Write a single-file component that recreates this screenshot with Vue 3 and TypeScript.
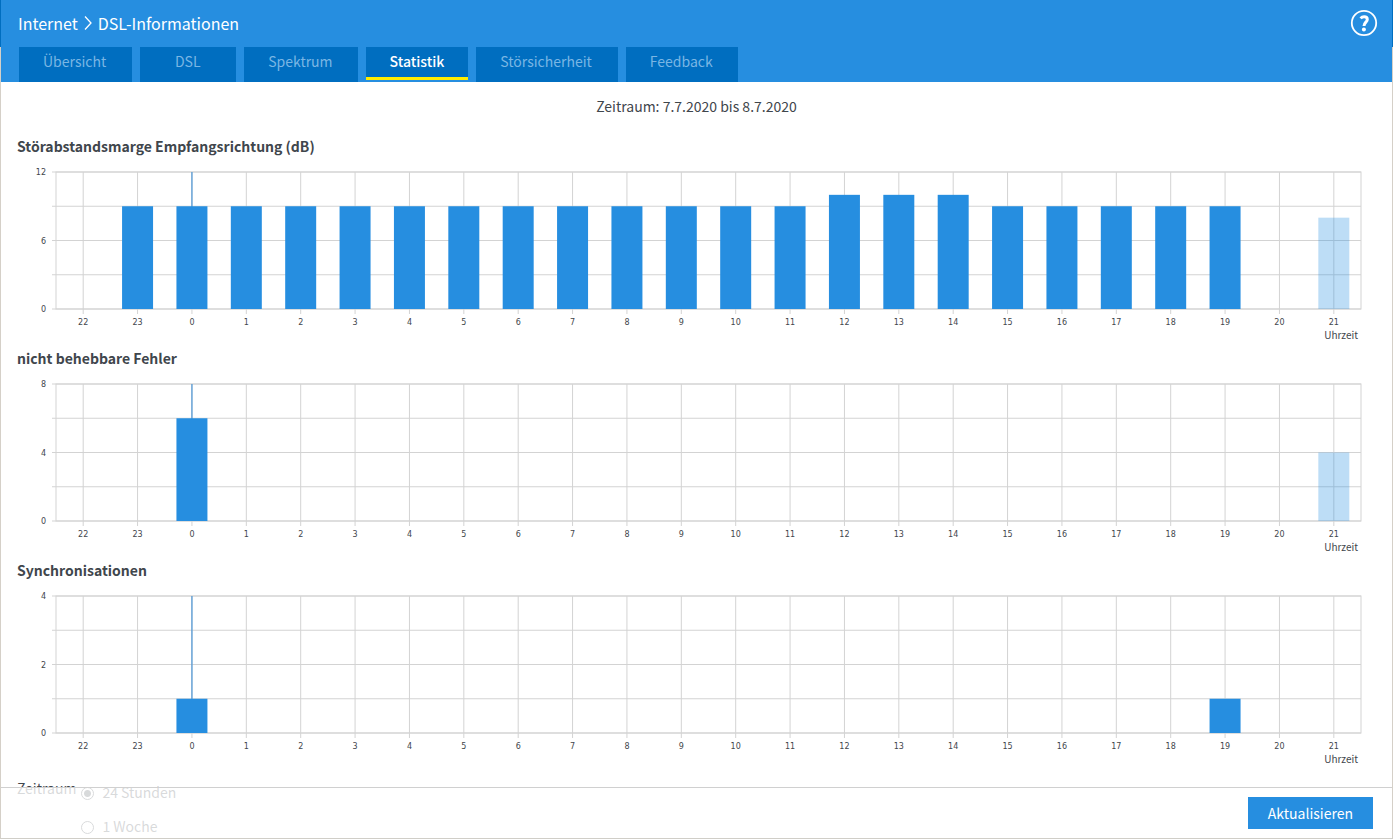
<script setup lang="ts">
interface Bar {
  hour: number
  value: number
  current?: boolean
}
interface Chart {
  title: string
  max: number
  bars: Bar[]
}

const tabs = ['Übersicht', 'DSL', 'Spektrum', 'Statistik', 'Störsicherheit', 'Feedback']
const activeTab = 'Statistik'

const hours = Array.from({ length: 24 }, (_, i) => (i + 22) % 24)
const plotHeight = 137
const barShare = 0.57

const marginValues = [9, 9, 9, 9, 9, 9, 9, 9, 9, 9, 9, 9, 9, 10, 10, 10, 9, 9, 9, 9, 9]

const charts: Chart[] = [
  {
    title: 'Störabstandsmarge Empfangsrichtung (dB)',
    max: 12,
    bars: [
      ...marginValues.map((value, i) => ({ hour: (i + 23) % 24, value })),
      { hour: 21, value: 8, current: true },
    ],
  },
  {
    title: 'nicht behebbare Fehler',
    max: 8,
    bars: [
      { hour: 0, value: 6 },
      { hour: 21, value: 4, current: true },
    ],
  },
  {
    title: 'Synchronisationen',
    max: 4,
    bars: [
      { hour: 0, value: 1 },
      { hour: 19, value: 1 },
    ],
  },
]

const center = (hour: number) => `${((hours.indexOf(hour) + 0.5) / 24) * 100}%`
const barLeft = (hour: number) => `${((hours.indexOf(hour) + (1 - barShare) / 2) / 24) * 100}%`
const barWidth = `${(barShare / 24) * 100}%`
const level = (value: number, max: number) => plotHeight * (1 - value / max)
</script>

<template>
  <div class="frame">
    <header>
      <div class="titlebar">
        <h1>
          Internet
          <svg class="chevron" viewBox="0 0 8 16" aria-hidden="true"><path d="M1 1.5 7 8 1 14.5" /></svg>
          DSL-Informationen
        </h1>
        <button class="help" type="button" aria-label="Hilfe">
          <svg viewBox="0 0 28 28" aria-hidden="true">
            <circle cx="14" cy="14" r="12.2" />
            <path class="hook" d="M10.6 9.4C11.6 8.2 12.7 7.7 14.1 7.7C16.1 7.7 17.3 8.8 17.3 10.4C17.3 13 14 13.4 14 17" />
            <circle class="dot" cx="13.9" cy="20.5" r="2" />
          </svg>
        </button>
      </div>
      <nav>
        <a v-for="tab in tabs" :key="tab" href="#" :class="{ active: tab === activeTab }">{{ tab }}</a>
      </nav>
    </header>

    <main>
      <p class="period">Zeitraum: 7.7.2020 bis 8.7.2020</p>

      <section v-for="chart in charts" :key="chart.title" class="chart">
        <h2>{{ chart.title }}</h2>
        <svg class="plot" role="img" :aria-label="chart.title">
          <g class="grid">
            <line v-for="n in 5" :key="'h' + n" x1="-4" x2="100%" :y1="(n - 1) * plotHeight / 4" :y2="(n - 1) * plotHeight / 4" />
            <line v-for="hour in hours" :key="'v' + hour" :x1="center(hour)" :x2="center(hour)" y1="0" :y2="plotHeight + 5" />
            <rect x="0" y="0" width="100%" :height="plotHeight" />
          </g>
          <line class="midnight" :x1="center(0)" :x2="center(0)" y1="0" :y2="plotHeight" />
          <rect
            v-for="bar in chart.bars"
            :key="bar.hour"
            :class="['bar', { current: bar.current }]"
            :x="barLeft(bar.hour)"
            :y="level(bar.value, chart.max)"
            :width="barWidth"
            :height="plotHeight - level(bar.value, chart.max)"
          />
          <g class="axis y">
            <text v-for="v in [0, chart.max / 2, chart.max]" :key="v" x="-10" :y="level(v, chart.max) + 3">{{ v }}</text>
          </g>
          <g class="axis x">
            <text v-for="hour in hours" :key="hour" :x="center(hour)" :y="plotHeight + 16">{{ hour }}</text>
          </g>
          <text class="unit" x="100%" dx="-3" :y="plotHeight + 30">Uhrzeit</text>
        </svg>
      </section>

      <div class="range" role="radiogroup" aria-labelledby="range-title">
        <span id="range-title">Zeitraum</span>
        <div class="options">
          <label><input type="radio" name="range" checked />24 Stunden</label>
          <label><input type="radio" name="range" />1 Woche</label>
        </div>
      </div>
    </main>

    <footer>
      <button type="button">Aktualisieren</button>
    </footer>
  </div>
</template>

<style>
body {
  margin: 0;
  background: #fff;
}
</style>

<style scoped>
.frame {
  position: relative;
  display: flex;
  flex-direction: column;
  box-sizing: border-box;
  height: 100vh;
  border-bottom: 1px solid #d0cec8;
  background: #fff;
  color: #3f464c;
  font-family: "Noto Sans CJK SC", "Noto Sans", sans-serif;
  font-size: 14px;
  line-height: 24px;
}
.titlebar {
  display: flex;
  align-items: center;
  justify-content: space-between;
  height: 47px;
  padding: 0 14px 2px 17px;
  border: solid #006ec0;
  border-width: 0 1px;
  background: #268ee0;
  box-sizing: border-box;
}
h1 {
  display: flex;
  align-items: center;
  gap: 6px;
  margin: 0;
  color: #fff;
  font-size: 16px;
  font-weight: 400;
}
.chevron {
  width: 8px;
  height: 16px;
  fill: none;
  stroke: #fff;
  stroke-width: 1.3;
}
.help {
  width: 28px;
  height: 28px;
  padding: 0;
  border: 0;
  background: none;
}
.help svg {
  display: block;
  fill: none;
  stroke: #fff;
  stroke-width: 1.8;
}
.help .hook {
  stroke-width: 3;
}
.help .dot {
  fill: #fff;
  stroke: none;
}
nav {
  display: flex;
  gap: 8px;
  height: 35px;
  padding: 0 18px;
  border: solid #d5d0c8;
  border-width: 0 1px;
  background: #268ee0;
  box-sizing: border-box;
}
nav a {
  box-sizing: border-box;
  min-width: 96px;
  height: 35px;
  padding: 0 25px 0 24px;
  background: #006ec0;
  color: #7ab6e4;
  line-height: 28px;
  text-align: center;
  text-decoration: none;
}
nav a:first-child,
nav a:nth-child(5) {
  padding-right: 26px;
}
nav a.active {
  height: 33px;
  padding: 0 24px;
  border-bottom: 3px solid #ffed00;
  color: #fff;
  font-weight: 500;
}
main {
  flex: 1;
  min-height: 0;
  padding: 12px 16px 0;
  border: solid #d5d0c8;
  border-width: 0 1px;
  overflow-y: auto;
  scrollbar-width: none;
}
.period {
  margin: 0 0 16px;
  text-align: center;
}
.chart {
  height: 212px;
}
h2 {
  margin: 0 0 14px;
  font-size: 14px;
  font-weight: 700;
}
.plot {
  display: block;
  width: calc(100% - 54px);
  height: 174px;
  margin-left: 39px;
  overflow: visible;
}
.grid {
  fill: none;
  stroke: #d3d3d3;
}
.midnight {
  stroke: #2d86d4;
}
.bar {
  fill: #268ee0;
}
.bar.current {
  opacity: 0.3;
}
.plot text {
  fill: #3f464c;
}
.axis text {
  font-family: "DejaVu Sans", sans-serif;
  font-size: 8px;
}
.axis.x text {
  text-anchor: middle;
}
.axis.y text,
.plot .unit {
  text-anchor: end;
}
.plot .unit {
  font-size: 10px;
}
.range {
  display: flex;
  gap: 5px;
  padding: 6px 0 56px;
}
.options {
  display: grid;
  gap: 10px;
  padding-top: 4px;
}
.options label {
  display: flex;
  align-items: center;
  gap: 8px;
}
.options input {
  appearance: none;
  box-sizing: border-box;
  width: 13px;
  height: 13px;
  margin: 2px 0 0;
  border: 1px solid #3f464c;
  border-radius: 50%;
}
.options input:checked {
  background: radial-gradient(circle, #3f464c 3px, transparent 4px);
}
footer {
  position: absolute;
  right: 1px;
  bottom: 0;
  left: 1px;
  display: flex;
  justify-content: flex-end;
  padding: 9px 19px;
  border-top: 1px solid #d0d0d0;
  background: rgba(255, 255, 255, 0.8);
}
footer button {
  height: 32px;
  padding: 0 20px;
  border: 0;
  background: #268ee0;
  color: #fff;
  font: inherit;
}
</style>
